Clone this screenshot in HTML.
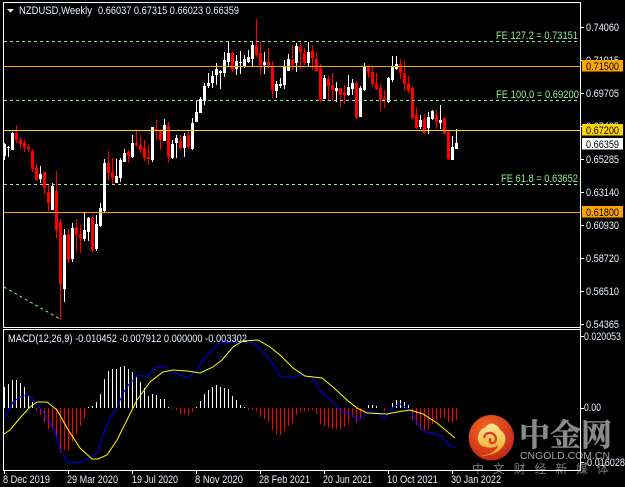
<!DOCTYPE html>
<html><head><meta charset="utf-8"><style>
html,body{margin:0;padding:0;background:#000;width:625px;height:487px;overflow:hidden}
svg{display:block}
text{font-family:"Liberation Sans","Noto Sans CJK SC",sans-serif;font-size:11px;fill:#e6f1ff}
.b{fill:#000}
.g{fill:#90ee90}
</style></head><body>
<svg width="625" height="487" viewBox="0 0 625 487" xmlns="http://www.w3.org/2000/svg">
<defs>
<radialGradient id="g1" cx="40%" cy="30%" r="80%"><stop offset="0" stop-color="#ee6a22"/><stop offset=".6" stop-color="#d83c1a"/><stop offset="1" stop-color="#b82414"/></radialGradient>
<linearGradient id="g2" x1="0" y1="0" x2="0" y2="1"><stop offset="0" stop-color="#fbe79e"/><stop offset=".6" stop-color="#f6c04c"/><stop offset="1" stop-color="#ee9c1e"/></linearGradient>
</defs>
<rect width="625" height="487" fill="#000"/>
<!-- logo -->
<g transform="translate(465 405) scale(.3333)">
<circle cx="79" cy="98" r="68" fill="url(#g1)"/>
<path d="M42 153C72 150 95 140 99 120C86 132 70 128 54 124C40 118 34 100 42 86C46 76 52 68 62 68C66 56 82 52 92 60C100 64 103 70 106 76C118 82 124 96 120 110C114 136 84 154 42 153Z" fill="url(#g2)"/>
<path d="M58 96C60 84 76 80 86 88C96 96 94 112 84 114C76 116 72 108 76 102" fill="none" stroke="#d8401a" stroke-width="7" stroke-linecap="round"/>
</g>
<text x="519" y="446" style="font-family:'Noto Serif CJK SC','Liberation Serif',serif;font-size:31px;font-weight:700;fill:#8a8a8a;stroke:#8a8a8a;stroke-width:.5px">中金网</text>
<text x="520" y="459" textLength="90" lengthAdjust="spacingAndGlyphs" style="font-size:10.5px;fill:#a0a0a0">CNGOLD.COM.CN</text>
<text x="472" y="473" style="font-family:'Noto Sans CJK SC',sans-serif;font-size:12px;letter-spacing:8.8px;fill:#7a7a7a">中文财经新媒体</text>

<!-- frames -->
<g shape-rendering="crispEdges" fill="#fff">
<rect x="3" y="2" width="578" height="1"/>
<rect x="3" y="2" width="1" height="326"/>
<rect x="3" y="327" width="578" height="1"/>
<rect x="3" y="329" width="578" height="1"/>
<rect x="3" y="329" width="1" height="142"/>
<rect x="3" y="470" width="578" height="1"/>
<rect x="580" y="2" width="1" height="469"/>
<path d="M581 27h3v1h-3zM581 60h3v1h-3zM581 93h3v1h-3zM581 126h3v1h-3zM581 159h3v1h-3zM581 192h3v1h-3zM581 225h3v1h-3zM581 258h3v1h-3zM581 291h3v1h-3zM581 324h3v1h-3zM581 336h3v1h-3zM581 408h3v1h-3zM581 462h3v1h-3z"/>
<path d="M4 471h1v3h-1zM68 471h1v3h-1zM132 471h1v3h-1zM196 471h1v3h-1zM260 471h1v3h-1zM324 471h1v3h-1zM388 471h1v3h-1zM452 471h1v3h-1z"/>
</g>

<!-- candles -->
<g fill="none" shape-rendering="crispEdges">
<path stroke="#fff" stroke-width="1" d="M4.5 143V160M8.5 146V157M12.5 132V150M40.5 166V183M52.5 183V210M64.5 229V302M72.5 223V262M84.5 213V241M88.5 217V241M96.5 215V251M100.5 203V227M104.5 159V212M116.5 159V183M120.5 158V182M124.5 149V162M132.5 135V158M152.5 127V162M164.5 119V141M172.5 140V159M176.5 135V158M184.5 133V157M192.5 118V150M196.5 100V122M200.5 97V113M204.5 83V105M208.5 73V88M212.5 71V88M216.5 63V85M220.5 70V89M224.5 52V77M228.5 42V66M236.5 55V75M240.5 51V74M244.5 55V68M248.5 50V63M252.5 41V66M264.5 52V74M276.5 81V98M280.5 78V88M284.5 60V89M288.5 54V71M296.5 43V72M308.5 42V67M324.5 75V99M336.5 82V102M348.5 75V96M352.5 79V95M360.5 86V117M364.5 63V91M388.5 77V103M392.5 56V82M396.5 56V70M420.5 115V129M428.5 112V134M432.5 110V120M440.5 105V129M452.5 136V160M456.5 129V149"/>
<path stroke="#fff" stroke-width="3" d="M4.5 144V156M8.5 147V148M12.5 133V150M40.5 174V179M52.5 186V210M64.5 235V289M72.5 228V259M84.5 230V239M88.5 218V232M96.5 224V249M100.5 208V226M104.5 163V211M116.5 176V183M120.5 160V178M124.5 153V162M132.5 143V157M152.5 127V160M164.5 125V141M172.5 144V158M176.5 138V143M184.5 136V148M192.5 123V149M196.5 112V122M200.5 99V113M204.5 86V101M208.5 83V86M212.5 76V83M216.5 69V75M220.5 71V73M224.5 60V73M228.5 53V62M236.5 61V69M240.5 62V63M244.5 59V66M248.5 57V62M252.5 45V59M264.5 62V65M276.5 84V91M280.5 84V86M284.5 67V85M288.5 59V71M296.5 46V63M308.5 52V63M324.5 78V99M336.5 88V91M348.5 87V95M352.5 83V89M360.5 88V117M364.5 67V90M388.5 78V102M392.5 67V80M396.5 64V69M420.5 120V127M428.5 117V128M432.5 111V119M440.5 120V123M452.5 147V160M456.5 143V149"/>
<path stroke="#f00" stroke-width="1" d="M16.5 125V143M20.5 137V149M24.5 140V152M28.5 144V152M32.5 149V172M36.5 163V180M44.5 172V194M48.5 185V211M56.5 171V238M60.5 219V320M68.5 229V263M76.5 219V252M80.5 225V253M92.5 215V252M108.5 151V181M112.5 158V185M128.5 150V163M136.5 131V147M140.5 135V153M144.5 140V161M148.5 145V165M156.5 120V140M160.5 129V150M168.5 122V163M180.5 135V150M188.5 131V149M232.5 52V72M256.5 19V57M260.5 42V75M268.5 48V68M272.5 61V98M292.5 45V70M300.5 43V69M304.5 48V65M312.5 45V70M316.5 52V72M320.5 64V102M328.5 76V100M332.5 73V101M340.5 88V107M344.5 85V104M356.5 82V119M368.5 65V78M372.5 67V87M376.5 73V90M380.5 83V111M384.5 90V108M400.5 59V79M404.5 61V90M408.5 76V93M412.5 86V119M416.5 107V129M424.5 114V134M436.5 110V129M444.5 117V134M448.5 130V160"/>
<path stroke="#f00" stroke-width="3" d="M16.5 133V140M20.5 140V144M24.5 143V148M28.5 147V149M32.5 151V169M36.5 168V180M44.5 172V188M48.5 192V203M56.5 191V230M60.5 222V284M68.5 234V260M76.5 227V235M80.5 234V238M92.5 218V250M108.5 163V173M112.5 172V178M128.5 152V156M136.5 143V145M140.5 145V150M144.5 148V158M148.5 157V159M156.5 129V131M160.5 130V140M168.5 126V157M180.5 141V148M188.5 135V147M232.5 53V70M256.5 45V55M260.5 53V65M268.5 62V65M272.5 67V90M292.5 60V65M300.5 47V52M304.5 53V63M312.5 51V58M316.5 59V71M320.5 68V100M328.5 79V86M332.5 85V90M340.5 88V95M344.5 93V95M356.5 83V117M368.5 66V73M372.5 72V84M376.5 84V89M380.5 88V100M384.5 98V100M400.5 64V73M404.5 73V84M408.5 83V91M412.5 88V118M416.5 115V128M424.5 119V133M436.5 115V122M444.5 118V134M448.5 132V159"/>
</g>

<!-- level lines -->
<g shape-rendering="crispEdges" fill="none">
<path stroke="#90ee90" stroke-dasharray="3 3" d="M4 41.5H579M4 100.5H579M4 184.5H579"/>
<path stroke="#ffa500" d="M4 66.5H580M4 212.5H580"/>
<path stroke="#ffd700" d="M4 130.5H580"/>
</g>
<path stroke="#90ee90" stroke-dasharray="3 3" fill="none" d="M4 287L60 319"/>

<!-- FE labels -->
<text x="496" y="39" class="g" textLength="82" lengthAdjust="spacingAndGlyphs">FE 127.2 = 0.73151</text>
<text x="496" y="98" class="g" textLength="83" lengthAdjust="spacingAndGlyphs">FE 100.0 = 0.69200</text>
<text x="501" y="182" class="g" textLength="77" lengthAdjust="spacingAndGlyphs">FE 61.8 = 0.63652</text>

<!-- title -->
<path d="M7 9h7l-3.5 3.5z" fill="#fff"/>
<text x="19" y="14" textLength="73" lengthAdjust="spacingAndGlyphs">NZDUSD,Weekly</text>
<text x="98" y="14" textLength="141" lengthAdjust="spacingAndGlyphs">0.66037 0.67315 0.66023 0.66359</text>

<!-- price axis -->
<text x="586" y="31" textLength="33" lengthAdjust="spacingAndGlyphs">0.74060</text>
<text x="586" y="64" textLength="33" lengthAdjust="spacingAndGlyphs">0.71915</text>
<text x="586" y="97" textLength="33" lengthAdjust="spacingAndGlyphs">0.69705</text>
<text x="586" y="130" textLength="33" lengthAdjust="spacingAndGlyphs">0.67495</text>
<text x="586" y="163" textLength="33" lengthAdjust="spacingAndGlyphs">0.65285</text>
<text x="586" y="196" textLength="33" lengthAdjust="spacingAndGlyphs">0.63140</text>
<text x="586" y="229" textLength="33" lengthAdjust="spacingAndGlyphs">0.60930</text>
<text x="586" y="262" textLength="33" lengthAdjust="spacingAndGlyphs">0.58720</text>
<text x="586" y="295" textLength="33" lengthAdjust="spacingAndGlyphs">0.56510</text>
<text x="586" y="328" textLength="33" lengthAdjust="spacingAndGlyphs">0.54365</text>
<g shape-rendering="crispEdges">
<rect x="582" y="60" width="41" height="11.5" fill="#ffa500"/>
<rect x="582" y="124" width="41" height="11.5" fill="#ffd700"/>
<rect x="582" y="138" width="41" height="11.5" fill="#fff"/>
<rect x="582" y="206" width="41" height="11.5" fill="#ffa500"/>
</g>
<text x="586" y="70" class="b" textLength="33" lengthAdjust="spacingAndGlyphs">0.71500</text>
<text x="586" y="134" class="b" textLength="33" lengthAdjust="spacingAndGlyphs">0.67200</text>
<text x="586" y="148" class="b" textLength="33" lengthAdjust="spacingAndGlyphs">0.66359</text>
<text x="586" y="216" class="b" textLength="33" lengthAdjust="spacingAndGlyphs">0.61800</text>

<!-- MACD -->
<g fill="none" shape-rendering="crispEdges">
<path stroke="#fff" d="M4.5 387V408M8.5 384V408M12.5 380V408M16.5 380V408M20.5 383V408M24.5 387V408M28.5 396V408M32.5 402V408M88.5 407V408M92.5 406V408M96.5 402V408M100.5 394V408M104.5 379V408M108.5 371V408M112.5 369V408M116.5 369V408M120.5 367V408M124.5 366V408M128.5 369V408M132.5 372V408M136.5 376V408M140.5 382V408M144.5 388V408M148.5 396V408M152.5 394V408M156.5 395V408M160.5 399V408M164.5 399V408M168.5 407V408M196.5 407V408M200.5 401V408M204.5 394V408M208.5 390V408M212.5 387V408M216.5 385V408M220.5 387V408M224.5 388V408M228.5 389V408M232.5 396V408M236.5 400V408M240.5 405V408M244.5 407V408M368.5 405V408M372.5 405V408M376.5 406V408M392.5 403V408M396.5 400V408M400.5 400V408M404.5 402V408M408.5 405V408"/>
<path stroke="#f00" d="M36.5 408V410M40.5 408V415M44.5 408V422M48.5 408V429M52.5 408V429M56.5 408V436M60.5 408V453M64.5 408V450M68.5 408V451M72.5 408V442M76.5 408V434M80.5 408V426M84.5 408V418M172.5 408V409M176.5 408V410M180.5 408V414M184.5 408V414M188.5 408V416M192.5 408V412M248.5 408V410M252.5 408V410M256.5 408V411M260.5 408V417M264.5 408V419M268.5 408V422M272.5 408V430M276.5 408V434M280.5 408V435M284.5 408V431M288.5 408V426M292.5 408V423M296.5 408V415M300.5 408V411M304.5 408V411M308.5 408V410M312.5 408V410M316.5 408V414M320.5 408V424M324.5 408V426M328.5 408V428M332.5 408V429M336.5 408V429M340.5 408V429M344.5 408V427M348.5 408V423M352.5 408V417M356.5 408V423M360.5 408V418M364.5 408V409M384.5 408V411M412.5 408V420M416.5 408V425M420.5 408V429M424.5 408V430M428.5 408V429M432.5 408V424M436.5 408V420M440.5 408V418M444.5 408V418M448.5 408V422M452.5 408V422M456.5 408V420"/>
</g>
<path fill="none" stroke="#0000ff" stroke-width="1" d="M4 418L8 412L13 402L20 397L28 395L33 400L40 408L50 422L55 432L60 450L65 457L68 463L82 462L90 458L98 452L103 435L110 418L117 408L123 393L130 383L138 375L148 376L155 368L165 366L170 371L180 375L188 378L197 370L203 360L210 352L220 343L237 342L253 342L268 357L280 376L292 378L300 375L313 378L321 392L330 400L342 412L350 413L357 420L362 418L368 411L375 412L385 418L393 407L400 404L410 410L417 423L425 432L433 433L442 436L448 445L455 448"/>
<path fill="none" stroke="#ffff00" stroke-width="1" d="M4 434L10 430L20 418L30 407L37 402L47 402L57 410L67 428L80 448L92 459L98 459L107 455L117 440L127 420L137 400L150 382L163 372L173 370L187 371L200 373L213 367L222 360L233 347L243 341L258 340L270 347L280 355L293 368L305 376L322 378L333 387L347 400L357 408L367 413L387 414L397 412L410 410L423 414L437 423L455 438"/>
<text x="8" y="342" textLength="239" lengthAdjust="spacingAndGlyphs">MACD(12,26,9) -0.010452 -0.007912 0.000000 -0.003302</text>
<text x="584" y="340" textLength="37" lengthAdjust="spacingAndGlyphs">0.020053</text>
<text x="584" y="411" textLength="17" lengthAdjust="spacingAndGlyphs">0.00</text>
<text x="584" y="466" textLength="41" lengthAdjust="spacingAndGlyphs">-0.016028</text>

<!-- dates -->
<text x="3" y="483" textLength="47" lengthAdjust="spacingAndGlyphs">8 Dec 2019</text>
<text x="67" y="483" textLength="51" lengthAdjust="spacingAndGlyphs">29 Mar 2020</text>
<text x="132" y="483" textLength="46" lengthAdjust="spacingAndGlyphs">19 Jul 2020</text>
<text x="195" y="483" textLength="48" lengthAdjust="spacingAndGlyphs">8 Nov 2020</text>
<text x="259" y="483" textLength="51" lengthAdjust="spacingAndGlyphs">28 Feb 2021</text>
<text x="323" y="483" textLength="49" lengthAdjust="spacingAndGlyphs">20 Jun 2021</text>
<text x="387" y="483" textLength="51" lengthAdjust="spacingAndGlyphs">10 Oct 2021</text>
<text x="451" y="483" textLength="50" lengthAdjust="spacingAndGlyphs">30 Jan 2022</text>
</svg>
</body></html>
